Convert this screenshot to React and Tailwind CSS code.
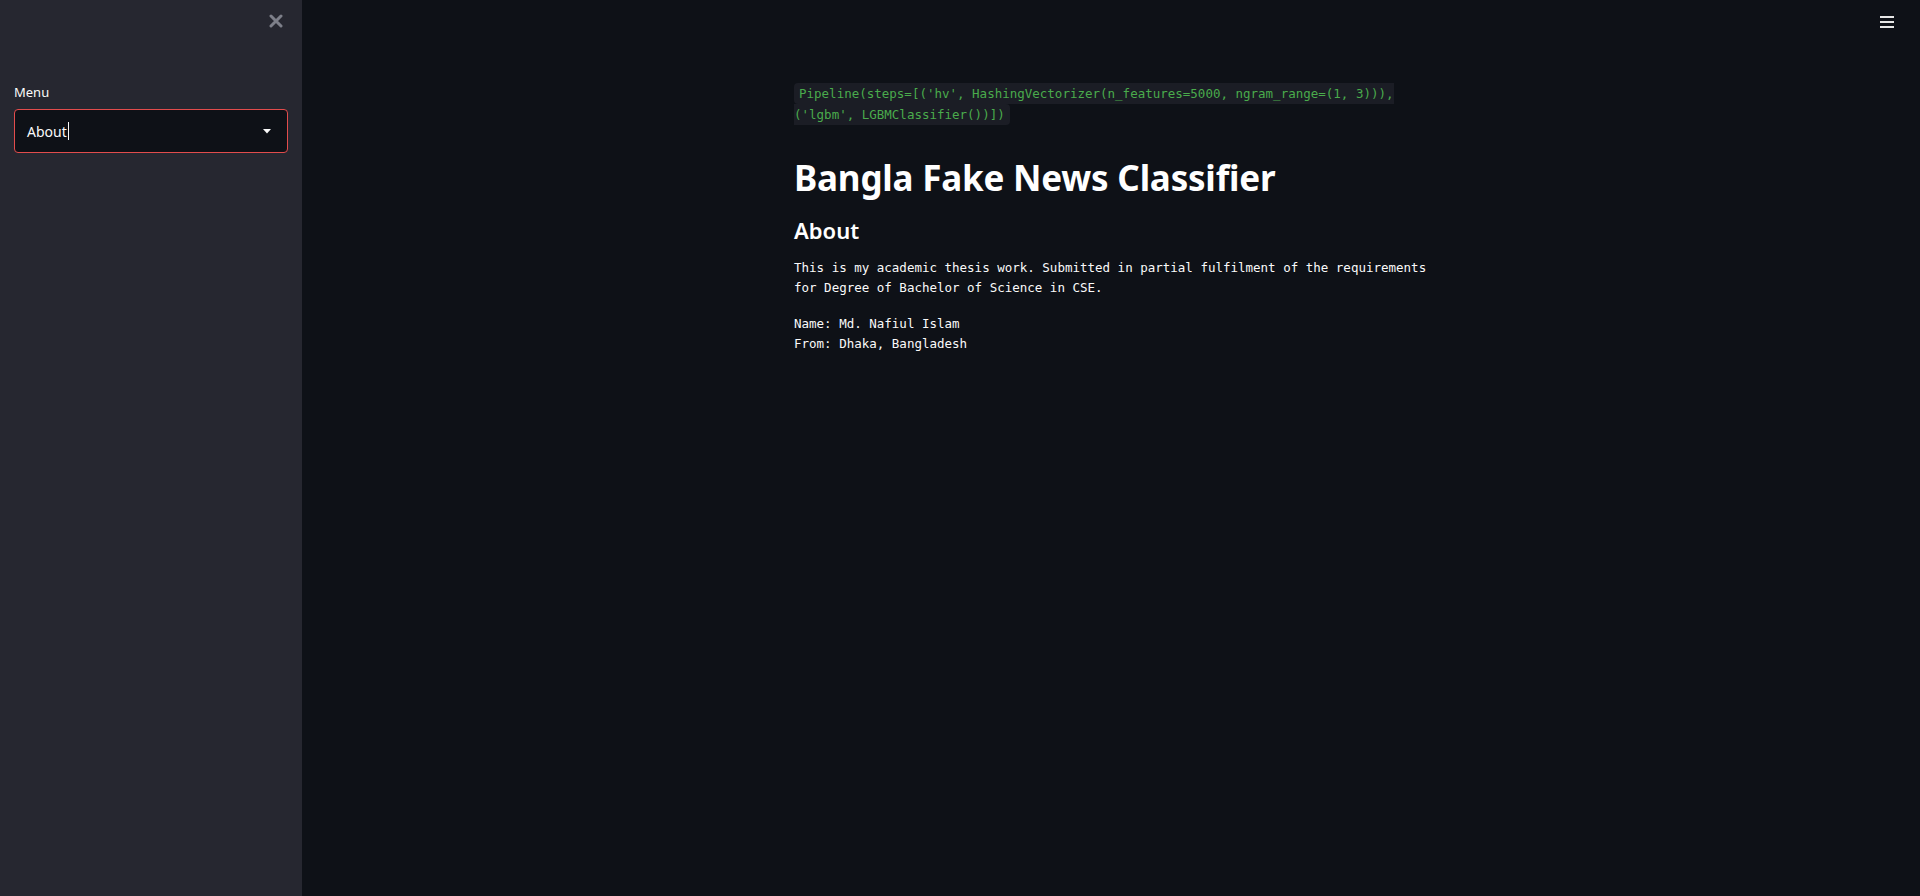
import React from 'react';

// Streamlit-like dark page: sidebar with a select, main column with an "About" page

const mono = { fontFamily: '"DejaVu Sans Mono", "Liberation Mono", monospace' };

function CloseIcon() {
	return (
		<svg width="14" height="14" viewBox="0 0 14 14" className="block">
			<path d="M2 2 L12 12 M12 2 L2 12" stroke="#7d7f89" strokeWidth="3" strokeLinecap="round" />
		</svg>
	);
}

function Hamburger() {
	return (
		<svg width="14" height="12" viewBox="0 0 14 12" className="block">
			<rect x="0" y="0" width="14" height="2" fill="#e6e6e6" />
			<rect x="0" y="5" width="14" height="2" fill="#e6e6e6" />
			<rect x="0" y="10" width="14" height="2" fill="#e6e6e6" />
		</svg>
	);
}

function Sidebar() {
	return (
		<aside className="w-[302px] shrink-0 bg-[#262730] min-h-[896px] px-[14px]">
			<div className="flex justify-end pt-[14px] pr-[5px]">
				<CloseIcon />
			</div>
			<div className="mt-[54px] text-[13px] text-[#fafafa] font-['Noto_Sans',sans-serif] leading-[20px]">Menu</div>
			<div className="mt-[7px] h-[44px] rounded-[4px] border border-[#e24c4c] bg-[#0e1117] flex items-center pl-[12px] pr-[16px]">
				<span className="text-[14px] text-[#fafafa] font-['Noto_Sans',sans-serif]">About</span>
				<span className="w-px h-[18px] bg-[#fafafa] ml-[1px]" />
				<span className="ml-auto">
					<svg width="8" height="5" viewBox="0 0 8 5" className="block">
						<path d="M0 0 H8 L4 4.5 Z" fill="#fafafa" />
					</svg>
				</span>
			</div>
		</aside>
	);
}

function Content() {
	return (
		<div className="mx-auto w-[730px] px-12 pt-[83px]">
			<p className="text-[12.5px] leading-[21px]" style={mono}>
				<code className="bg-[#1b1d25] text-[#4aab4c] rounded-[4px] px-[5px] py-[3px] text-[12.5px] leading-[21px]" style={mono}>
					Pipeline(steps=[('hv', HashingVectorizer(n_features=5000, ngram_range=(1, 3))),<br />('lgbm', LGBMClassifier())])
				</code>
			</p>
			<h1 className="mt-[31px] text-[35px] leading-[44px] font-bold text-white tracking-[-0.2px] font-['Noto_Sans',sans-serif]">
				Bangla Fake News Classifier
			</h1>
			<h2 className="mt-[14px] text-[22px] leading-[32px] font-semibold text-white font-['Noto_Sans',sans-serif]">
				About
			</h2>
			<div className="mt-[12px] text-[12.5px] leading-[20px] text-[#fafafa]" style={mono}>
				<p>This is my academic thesis work. Submitted in partial fulfilment of the requirements for Degree of Bachelor of Science in CSE.</p>
				<p className="mt-[16px]">Name: Md. Nafiul Islam</p>
				<p>From: Dhaka, Bangladesh</p>
			</div>
		</div>
	);
}

export default function App() {
	return (
		<div className="flex w-full h-[896px] overflow-hidden bg-[#0e1117]">
			<Sidebar />
			<main className="relative flex-1 bg-[#0e1117]">
				<div className="absolute top-[16px] right-[26px]">
					<Hamburger />
				</div>
				<Content />
			</main>
		</div>
	);
}
